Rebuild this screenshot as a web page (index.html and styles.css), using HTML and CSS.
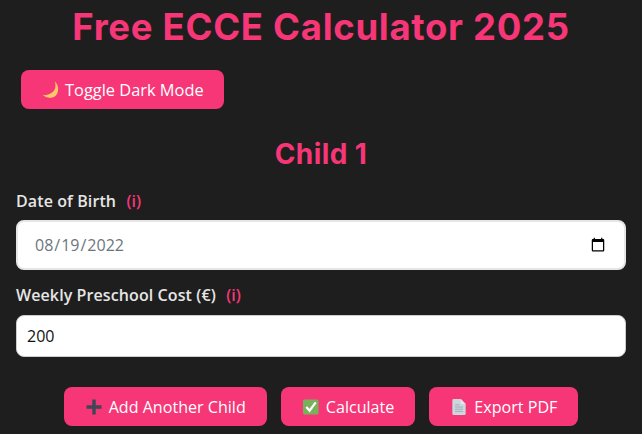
FILE: index.html
```html
<!DOCTYPE html>
<html lang="en">
<head>
<meta charset="utf-8">
<title>Free ECCE Calculator 2025</title>
<link rel="stylesheet" href="styles.css">
</head>
<body>
<main class="page">
  <h1 class="title">Free ECCE Calculator 2025</h1>
  <div class="toggle-row">
    <button class="btn btn-toggle" type="button">
      <svg class="icon icon-moon" viewBox="0 0 18 18" aria-hidden="true"><path d="M12.6 0.6C15 6 13 13 3 14.2L0.6 13.8C4 17.4 10.6 18 14 14.4 17.4 10.6 16.6 3.4 12.6 0.6Z" fill="#fdc868"/></svg>
      Toggle Dark Mode
    </button>
  </div>
  <h2 class="child">Child 1</h2>
  <div class="field">
    <label class="label" for="dob">Date of Birth <span class="info">(i)</span></label>
    <input class="input input-date" id="dob" type="date" value="2022-08-19">
  </div>
  <div class="field">
    <label class="label" for="cost">Weekly Preschool Cost (€) <span class="info">(i)</span></label>
    <input class="input input-number" id="cost" type="text" value="200">
  </div>
  <div class="actions">
    <button class="btn" type="button">
      <svg class="icon" viewBox="0 0 16 16" aria-hidden="true"><path d="M6.3 0.5H9.7V6.3H15.5V9.7H9.7V15.5H6.3V9.7H0.5V6.3H6.3Z" fill="#3d4756"/></svg>
      Add Another Child
    </button>
    <button class="btn" type="button">
      <svg class="icon" viewBox="0 0 17 17" aria-hidden="true"><rect x="0" y="0.5" width="16.5" height="16" rx="1.5" fill="#78b159"/><path d="M3.5 8.5L7 12.5 13.5 3.5" fill="none" stroke="#fff" stroke-width="2.4"/></svg>
      Calculate
    </button>
    <button class="btn" type="button">
      <svg class="icon" viewBox="0 0 15 18" aria-hidden="true"><path d="M1.5 0H9.5L15 5.5V16.5A1.5 1.5 0 0 1 13.5 18H1.5A1.5 1.5 0 0 1 0 16.5V1.5A1.5 1.5 0 0 1 1.5 0Z" fill="#ccd6dd"/><path d="M9.5 0L15 5.5H9.5Z" fill="#e1e8ed"/><path d="M3 6.5H8M3 9H12M3 11.5H12M3 14H12" stroke="#99aab5" stroke-width="1"/></svg>
      Export PDF
    </button>
  </div>
</main>
</body>
</html>
```
FILE: styles.css
```css
* { box-sizing: border-box; }
html, body { margin: 0; height: 100%; overflow: hidden; }
body {
  background: #1e1e1e;
  color: #e6e6e6;
  font-family: "Open Sans", "Noto Sans", sans-serif;
  font-size: 16px;
}
.page { padding: 0 16px; }
.title {
  margin: 0;
  padding-top: 5px;
  height: 70px;
  text-align: center;
  color: #f63677;
  font-family: Inter, sans-serif;
  font-size: 36.5px;
  letter-spacing: 0.7px;
  line-height: 44px;
  font-weight: 700;
}
.toggle-row { padding-left: 5px; }
.btn {
  display: inline-flex;
  align-items: center;
  justify-content: center;
  gap: 7px;
  height: 39px;
  padding: 0 21px 0 22px;
  border: 0;
  border-radius: 8px;
  background: #f63677;
  color: #fff;
  font-family: inherit;
  font-size: 16.1px;
}
.btn-toggle {
  gap: 6px;
  padding-right: 20px;
  font-size: 16.4px;
}
.icon { width: 16px; height: 16px; flex: none; }
.icon-moon { width: 18px; height: 18px; margin-left: -1px; margin-right: -1px; }
.child {
  margin: 29px 0 0;
  height: 32px;
  text-align: center;
  color: #f63677;
  font-family: Inter, sans-serif;
  font-size: 28px;
  letter-spacing: 0.4px;
  line-height: 32px;
  font-weight: 700;
}
.field { display: flex; flex-direction: column; }
.label {
  display: block;
  font-size: 16px;
  letter-spacing: 0.1px;
  font-weight: 600;
  line-height: 20px;
}
.info { color: #f63677; margin-left: 6px; }
.child + .field { margin-top: 21px; }
.field + .field { margin-top: 15px; }
.input {
  width: 100%;
  margin-top: 9px;
  border-radius: 8px;
  background: #fff;
  font-family: inherit;
  font-size: 16px;
}
.input-date {
  height: 50px;
  padding: 0 16px;
  border: 2px solid #e6e6e6;
  color: #6c757d;
}
.input-number {
  height: 42px;
  margin-top: 10px;
  padding: 0 10px;
  border: 1px solid #ccc;
  color: #111;
}
.actions {
  display: flex;
  justify-content: center;
  gap: 14px;
  margin-top: 30px;
}
```
